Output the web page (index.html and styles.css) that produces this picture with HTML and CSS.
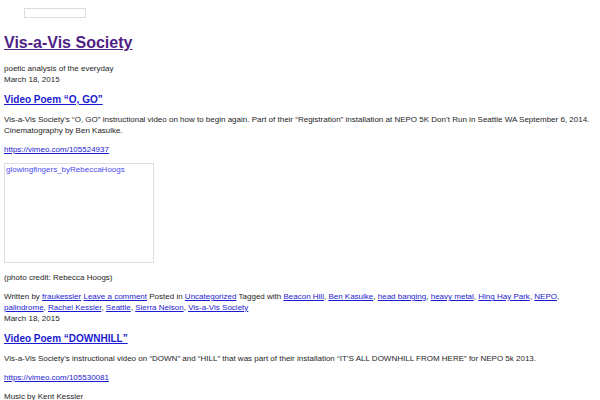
FILE: index.html
```html
<!DOCTYPE html>
<html>
<head>
<meta charset="utf-8">
<link rel="stylesheet" href="styles.css">
</head>
<body>
<div class="page">
  <header class="site-header">
    <div class="search"><input class="search-input" type="text"></div>
    <h1 class="site-title"><a href="#">Vis-a-Vis Society</a></h1>
    <p class="tagline">poetic analysis of the everyday</p>
  </header>

  <article class="post">
    <div class="post-date">March 18, 2015</div>
    <h2 class="post-title"><a href="#">Video Poem “O, GO”</a></h2>
    <p>Vis-a-Vis Society’s “O, GO” instructional video on how to begin again. Part of their “Registration” installation at NEPO 5K Don’t Run in Seattle WA September 6, 2014. Cinematography by Ben Kasulke.</p>
    <p><a href="#">https://vimeo.com/105524937</a></p>
    <div class="img-box"><a href="#">glowingfingers_byRebeccaHoogs</a></div>
    <p>(photo credit: Rebecca Hoogs)</p>
    <div class="post-meta">Written by <a href="#">fraukessler</a> <a href="#">Leave a comment</a> Posted in <a href="#">Uncategorized</a> Tagged with <a href="#">Beacon Hill</a>, <a href="#">Ben Kasulke</a>, <a href="#">head banging</a>, <a href="#">heavy metal</a>, <a href="#">Hing Hay Park</a>, <a href="#">NEPO</a>, <a href="#">palindrome</a>, <a href="#">Rachel Kessler</a>, <a href="#">Seattle</a>, <a href="#">Sierra Nelson</a>, <a href="#">Vis-a-Vis Society</a></div>
  </article>

  <article class="post">
    <div class="post-date">March 18, 2015</div>
    <h2 class="post-title"><a href="#">Video Poem “DOWNHILL”</a></h2>
    <p>Vis-a-Vis Society’s instructional video on “DOWN” and “HILL” that was part of their installation “IT’S ALL DOWNHILL FROM HERE” for NEPO 5k 2013.</p>
    <p><a href="#">https://vimeo.com/105530081</a></p>
    <p>Music by Kent Kessler</p>
  </article>
</div>
</body>
</html>
```

FILE: styles.css
```css
html, body {
  margin: 0;
  padding: 0;
  background: #fff;
}
body {
  font-family: "Liberation Sans", Arial, sans-serif;
  font-size: 8px;
  line-height: 11px;
  color: #1e1e1e;
}
a {
  color: #1a1ad0;
  text-decoration: underline;
}
.page {
  padding: 0 4px;
}
.site-header {
  padding-top: 8px;
}
.search {
  padding-left: 20px;
  height: 10px;
}
.search-input {
  display: block;
  box-sizing: border-box;
  width: 62px;
  height: 10px;
  margin: 0;
  padding: 0;
  border: 1px solid #dcdcdc;
  background: #fff;
  outline: none;
}
.site-title {
  margin: 15px 0 0 0;
  font-size: 16px;
  line-height: 20px;
  font-weight: bold;
}
.site-title a {
  color: #4f1f86;
}
.tagline {
  margin: 10px 0 0 0;
}
.post-date {
  line-height: 11px;
}
.post-title {
  margin: 8px 0 7px 0;
  font-size: 10px;
  line-height: 14px;
  font-weight: bold;
}
.post-title a {
  color: #1a1ad0;
}
.post p {
  margin: 0 0 8px 0;
}
.img-box {
  box-sizing: border-box;
  width: 150px;
  height: 100px;
  border: 1px solid #dedede;
  padding: 0 1px;
  margin-bottom: 9px;
}
.img-box a {
  color: #4a4af0;
  text-decoration: none;
}
.post-meta {
  margin-top: 8px;
}
```
